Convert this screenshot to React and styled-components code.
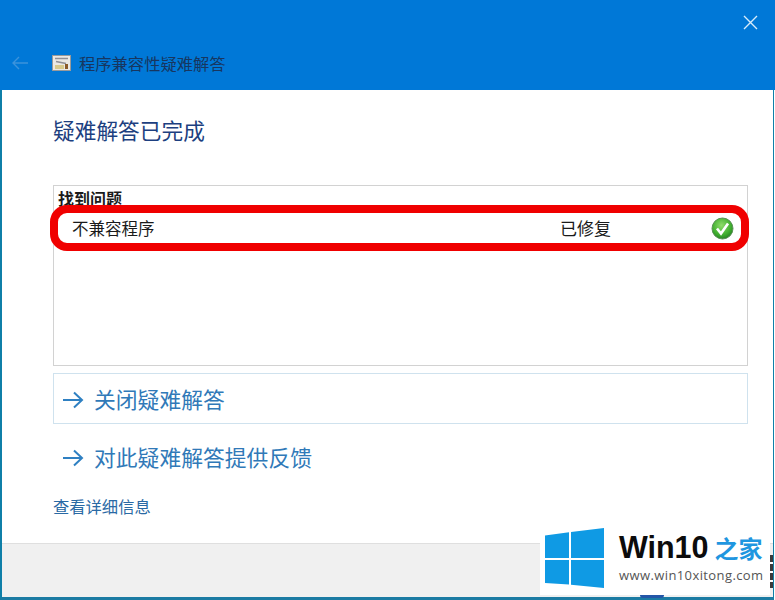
import * as React from 'react'
import styled, { createGlobalStyle } from 'styled-components'

const CJK = `"Noto Sans CJK SC", "Noto Sans", sans-serif`

const Global = createGlobalStyle`
  html, body { margin: 0; padding: 0; background: #fff; overflow: hidden; }
  body { font-family: ${CJK}; }
`

const Window = styled('div')`
  position: relative;
  width: 774px;
  height: 600px;
  box-sizing: border-box;
  display: flex;
  flex-direction: column;
  background: #fff;
  border-left: 2px solid #0f7fa8;
  border-right: 1px solid #0f7fa8;
  border-bottom: 3px solid #1b7ba3;
`

const Header = styled('header')`
  height: 90px;
  margin: 0 -2px 0 -2px;
  flex: none;
  box-sizing: border-box;
  background: #0078d7;
  display: flex;
  flex-direction: column;
`

const CloseRow = styled('div')`
  height: 44px;
  display: flex;
  justify-content: flex-end;
  align-items: center;
  padding-right: 17px;
`

const TitleRow = styled('div')`
  display: flex;
  align-items: center;
  height: 38px;
  padding-left: 11px;
`

const BackSlot = styled('span')`
  width: 41px;
  display: flex;
`

const HeaderTitle = styled('span')`
  margin-left: 8px;
  font-size: 16.3px;
  line-height: 20px;
  color: #17365f;
`

const Body = styled('main')`
  flex: 1;
  display: flex;
  flex-direction: column;
  padding: 0 25px 0 51px;
`

const Heading = styled('h1')`
  margin: 25px 0 0;
  font-size: 21.7px;
  font-weight: 400;
  line-height: 30px;
  color: #1d3f80;
`

const ResultList = styled('section')`
  margin-top: 40px;
  height: 181px;
  box-sizing: border-box;
  border: 1px solid #d2d2d2;
  display: flex;
  flex-direction: column;
`

const ListTitle = styled('div')`
  height: 19px;
  padding-left: 4px;
  font-size: 16px;
  line-height: 24px;
  font-weight: 700;
  color: #1a1a1a;
`

const ResultRow = styled('div')`
  height: 46px;
  margin: 0 -2px 0 -4px;
  box-sizing: border-box;
  border: 8px solid #f00000;
  border-radius: 17px;
  background: #fff;
  display: grid;
  grid-template-columns: 489px 1fr 23px;
  align-items: center;
  padding-left: 14px;
  padding-right: 7px;
  font-size: 16.5px;
  line-height: 28px;
  color: #1a1a1a;
`

const Status = styled('span')`
  font-size: 17px;
  margin-left: -1px;
  margin-top: -1px;
`

const LinkRow = styled('a')`
  height: 51px;
  box-sizing: border-box;
  display: flex;
  align-items: center;
  gap: 10px;
  padding: 0 0 1px 8px;
  font-size: 21.8px;
  color: #3079b8;
  border: 1px solid ${({ $outlined }) => ($outlined ? '#cfe2ee' : 'transparent')};
  margin-top: ${({ $gap }) => $gap}px;
`

const LinkArrow = styled('svg')`
  margin-top: 4px;
  flex: none;
`

const Details = styled('a')`
  margin-top: 14px;
  font-size: 16.3px;
  line-height: 20px;
  color: #2a69a4;
`

const Footer = styled('footer')`
  height: 54px;
  flex: none;
  background: #f0f0f0;
  border-top: 1px solid #dfdfdf;
  box-sizing: border-box;
`

const Watermark = styled('div')`
  position: absolute;
  left: 538px;
  bottom: 2px;
  width: 230px;
  height: 77px;
  padding: 10px 0 0 5px;
  box-sizing: border-box;
  background: #fff;
  display: flex;
  gap: 14px;
`

const BrandText = styled('div')`
  display: flex;
  flex-direction: column;
`

const BrandName = styled('div')`
  display: flex;
  align-items: center;
  height: 38px;
  font-family: "Liberation Sans", Arial, sans-serif;
  font-size: 30.5px;
  font-weight: 700;
  color: #0c0c0c;
`

const BrandCjk = styled('span')`
  margin-left: 6px;
  font-family: ${CJK};
  font-size: 24px;
  color: #1f96e0;
`

const BrandUrl = styled('div')`
  font-family: "Open Sans", "Liberation Sans", sans-serif;
  font-size: 13px;
  line-height: 18px;
  letter-spacing: 0.4px;
  color: #555;
`

const PeekArc = styled('span')`
  position: absolute;
  left: 100px;
  bottom: -3px;
  width: 24px;
  height: 3px;
  border-radius: 0 0 12px 12px;
  background: #2456a8;
`

const EdgeMarks = styled('span')`
  position: absolute;
  left: 230px;
  top: 37px;
  width: 3px;
  height: 33px;
  background: repeating-linear-gradient(#3a3a3a 0 7px, #fff 7px 9px);
`

const Arrow = () => (
  <LinkArrow width="22" height="22" viewBox="0 0 22 22" fill="none" stroke="#2f80c2" strokeWidth="2">
    <path d="M1 11h19M12 3.5l8 7.5-8 7.5" />
  </LinkArrow>
)

const BackIcon = () => (
  <svg width="18" height="18" viewBox="0 0 18 18" fill="none" stroke="#3b93dc" strokeWidth="1.4">
    <path d="M17 9H2M8 3L2 9l6 6" />
  </svg>
)

const CloseIcon = () => (
  <svg width="15" height="15" viewBox="0 0 15 15" stroke="#d8ecfa" strokeWidth="1.4">
    <path d="M1 1l13 13M14 1L1 14" />
  </svg>
)

const AppIcon = () => (
  <svg width="19" height="16" viewBox="0 0 19 16">
    <rect x="0.5" y="0.5" width="18" height="15" fill="#ebe8e4" stroke="#9a9a9a" />
    <path d="M3 3.5h13M4 6.5l10 2" stroke="#8f8f96" strokeWidth="1.6" />
    <rect x="3" y="10" width="9" height="4" fill="#d8c98c" />
    <rect x="13" y="9" width="3" height="5" fill="#8a5a2a" />
  </svg>
)

const CheckIcon = () => (
  <svg width="23" height="23" viewBox="0 0 23 23">
    <defs>
      <radialGradient id="ok" cx="45%" cy="35%" r="70%">
        <stop offset="0%" stopColor="#8fdc6a" />
        <stop offset="65%" stopColor="#3fae2e" />
        <stop offset="100%" stopColor="#22791f" />
      </radialGradient>
    </defs>
    <circle cx="11.5" cy="11.5" r="10.5" fill="url(#ok)" stroke="#5a8f55" />
    <path d="M6 11.5l4 5 7-10" fill="none" stroke="#fff" strokeWidth="2.6" />
  </svg>
)

const WinLogo = () => (
  <svg width="60" height="60" viewBox="0 0 60 60" fill="#0f9ae4">
    <path d="M0 7.5l24-3.3V30H0zM26 3.9L59 0v30H26zM0 32h24v24.5L0 55zM26 32h33v28l-33-3.3z" />
  </svg>
)

export default function App() {
  return (
    <Window>
      <Global />
      <Header>
        <CloseRow>
          <CloseIcon />
        </CloseRow>
        <TitleRow>
          <BackSlot>
            <BackIcon />
          </BackSlot>
          <AppIcon />
          <HeaderTitle>程序兼容性疑难解答</HeaderTitle>
        </TitleRow>
      </Header>
      <Body>
        <Heading>疑难解答已完成</Heading>
        <ResultList>
          <ListTitle>找到问题</ListTitle>
          <ResultRow>
            <span>不兼容程序</span>
            <Status>已修复</Status>
            <CheckIcon />
          </ResultRow>
        </ResultList>
        <LinkRow $outlined $gap={7}>
          <Arrow />
          关闭疑难解答
        </LinkRow>
        <LinkRow $gap={7}>
          <Arrow />
          对此疑难解答提供反馈
        </LinkRow>
        <Details>查看详细信息</Details>
      </Body>
      <Footer />
      <Watermark>
        <WinLogo />
        <BrandText>
          <BrandName>
            Win10
            <BrandCjk>之家</BrandCjk>
          </BrandName>
          <BrandUrl>www.win10xitong.com</BrandUrl>
        </BrandText>
        <PeekArc />
        <EdgeMarks />
      </Watermark>
    </Window>
  )
}
